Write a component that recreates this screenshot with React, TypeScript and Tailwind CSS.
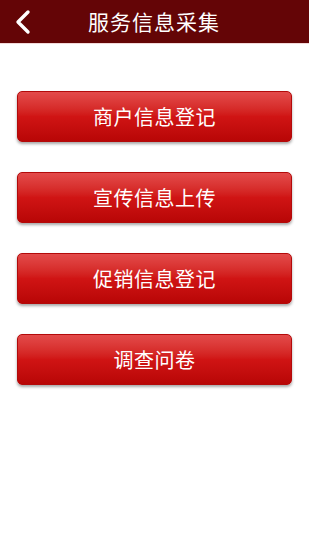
const items = ["商户信息登记", "宣传信息上传", "促销信息登记", "调查问卷"];

export default function App() {
  return (
    <div
      className="w-[309px] h-[550px] bg-white flex flex-col"
      style={{ fontFamily: '"Noto Sans CJK SC", "Noto Sans", sans-serif' }}
    >
      {/* Header */}
      <div className="h-[44px] bg-[#640506] flex items-center shrink-0 border-b border-[#f3d9d9]">
        <div className="w-[46px] pl-[14px] flex items-center">
          <svg width="18" height="26" viewBox="0 0 18 26">
            <path d="M14 3 L4 13 L14 23" fill="none" stroke="white" strokeWidth="3.4" strokeLinecap="round" strokeLinejoin="round" />
          </svg>
        </div>
        <h1 className="ml-[42px] text-white text-[21px] tracking-[1px] leading-none">服务信息采集</h1>
      </div>

      {/* Buttons */}
      <div className="flex flex-col gap-[30px] px-[17px] pt-[47px]">
        {items.map((label) => (
          <button
            key={label}
            className="h-[51px] w-[275px] rounded-[5px] bg-gradient-to-b from-[#e34a4a] via-[#d01414] to-[#b80606] text-white text-[20px] tracking-[0.5px] shadow-[0_2px_3px_rgba(0,0,0,0.35)] border border-[#b30a0a]"
          >
            {label}
          </button>
        ))}
      </div>
    </div>
  );
}
